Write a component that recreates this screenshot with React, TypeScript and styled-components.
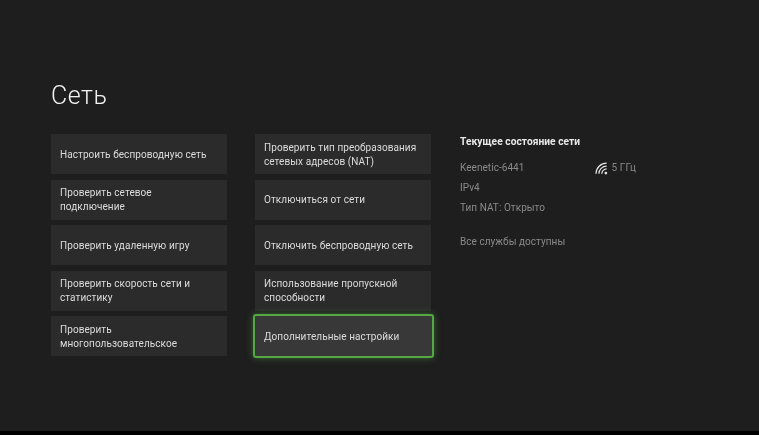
import React from "react";
import styled, { createGlobalStyle } from "styled-components";

const GlobalStyle = createGlobalStyle`
    html, body {
        margin: 0;
        padding: 0;
        height: 100%;
        background: #000;
    }
    #root {
        height: 100%;
    }
`;

const Screen = styled.div`
    box-sizing: border-box;
    width: 759px;
    height: 431px;
    padding: 80px 0 0 51px;
    background: #1e1e1e;
    font-family: Roboto, "Noto Sans", sans-serif;
    overflow: hidden;
    filter: blur(0.3px);
`;

const Title = styled.h1`
    margin: 0 0 22px;
    height: 32px;
    font-size: 25px;
    line-height: 32px;
    font-weight: 300;
    letter-spacing: 0.5px;
    color: #f2f2f2;
`;

const Columns = styled.div`
    display: flex;
    gap: 28px;
`;

const TileColumn = styled.div`
    display: flex;
    flex-direction: column;
    gap: 5.6px;
    width: 176px;
`;

const Tile = styled.div<{ $focused?: boolean }>`
    box-sizing: border-box;
    display: flex;
    align-items: center;
    height: 40px;
    padding: 1px 9px 0;
    background: ${(p) => (p.$focused ? "#383838" : "#2b2b2b")};
    font-size: 10px;
    line-height: 14px;
    letter-spacing: 0.07px;
    color: #dcdcdc;
    ${(p) =>
        p.$focused &&
        `
        height: 44px;
        margin: -2px -3px -2px -2px;
        padding: 2px 9px 0;
        border: 2px solid #55a845;
        border-radius: 3px;
        box-shadow: 0 0 7px rgba(85, 168, 69, 0.5);
    `}
`;

const Status = styled.div`
    width: 176px;
    margin-left: 1px;
    padding-top: 1px;
    font-size: 10px;
    letter-spacing: 0.05px;
    color: #8a8a8a;
`;

const StatusTitle = styled.div`
    height: 14px;
    margin-bottom: 12px;
    font-size: 10.2px;
    line-height: 14px;
    font-weight: 700;
    color: #e8e8e8;
`;

const StatusRow = styled.div<{ $gap?: number }>`
    display: flex;
    align-items: center;
    justify-content: space-between;
    height: 14px;
    line-height: 14px;
    margin-bottom: ${(p) => p.$gap ?? 6}px;
`;

const Band = styled.div`
    display: flex;
    align-items: center;
    gap: 3px;
    width: 41px;
    white-space: nowrap;
`;

const WifiIcon = () => (
    <svg width="14" height="13" viewBox="0 0 14 13" fill="none" stroke="#e4e4e4" strokeWidth="1.3">
        <path d="M1 12A11 11 0 0 1 12 1" />
        <path d="M4 12A8 8 0 0 1 12 4" />
        <path d="M7 12A5 5 0 0 1 12 7" />
        <circle cx="11.2" cy="11.2" r="1.4" fill="#e4e4e4" stroke="none" />
    </svg>
);

const firstColumn = [
    "Настроить беспроводную сеть",
    "Проверить сетевое подключение",
    "Проверить удаленную игру",
    "Проверить скорость сети и статистику",
    "Проверить многопользовательское",
];

const secondColumn = [
    "Проверить тип преобразования сетевых адресов (NAT)",
    "Отключиться от сети",
    "Отключить беспроводную сеть",
    "Использование пропускной способности",
];

export default function App() {
    return (
        <>
            <GlobalStyle />
            <Screen>
                <Title>Сеть</Title>
                <Columns>
                    <TileColumn>
                        {firstColumn.map((label) => (
                            <Tile key={label}>
                                <span>{label}</span>
                            </Tile>
                        ))}
                    </TileColumn>
                    <TileColumn>
                        {secondColumn.map((label) => (
                            <Tile key={label}>
                                <span>{label}</span>
                            </Tile>
                        ))}
                        <Tile $focused>
                            <span>Дополнительные настройки</span>
                        </Tile>
                    </TileColumn>
                    <Status>
                        <StatusTitle>Текущее состояние сети</StatusTitle>
                        <StatusRow>
                            <span>Keenetic-6441</span>
                            <Band>
                                <WifiIcon />
                                <span>5 ГГц</span>
                            </Band>
                        </StatusRow>
                        <StatusRow>IPv4</StatusRow>
                        <StatusRow $gap={20}>Тип NAT: Открыто</StatusRow>
                        <StatusRow>Все службы доступны</StatusRow>
                    </Status>
                </Columns>
            </Screen>
        </>
    );
}
